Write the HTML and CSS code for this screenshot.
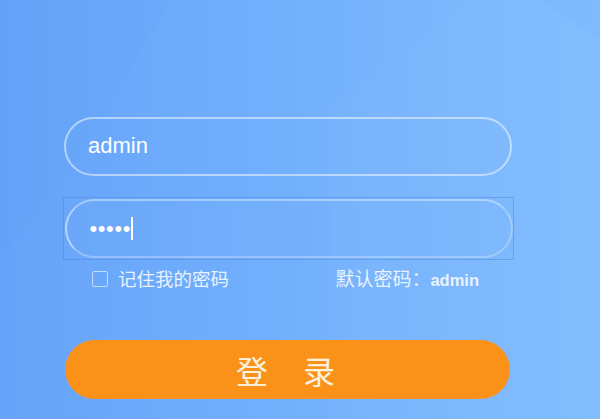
FILE: index.html
```html
<!DOCTYPE html>
<html lang="zh-CN">
<head>
<meta charset="utf-8">
<title>登录</title>
<link rel="stylesheet" href="styles.css">
</head>
<body>
<div class="bg">
  <svg class="shapes" width="600" height="419" viewBox="0 0 600 419" aria-hidden="true">
    <polygon points="330,110 470,0 600,0 600,419 330,419" fill="#ffffff" fill-opacity="0.025"/>
    <polygon points="0,0 170,0 90,140 0,260" fill="#3f7fe6" fill-opacity="0.025"/>
    <polygon points="540,0 600,0 600,40" fill="#4c8ae8" fill-opacity="0.05"/>
  </svg>
  <form class="login">
    <div class="field">
      <span class="value">admin</span>
    </div>
    <div class="focus-ring">
      <div class="field focused">
        <span class="dots">•••••</span><span class="caret"></span>
      </div>
    </div>
    <div class="options">
      <label class="remember"><span class="check"></span><span>记住我的密码</span></label>
      <span class="hint">默认密码：<b>admin</b></span>
    </div>
    <div class="submit">登 录</div>
  </form>
</div>
</body>
</html>
```
FILE: styles.css
```css
html, body {
  margin: 0;
  padding: 0;
}
body {
  width: 600px;
  height: 419px;
  overflow: hidden;
  font-family: "Liberation Sans", "Noto Sans CJK SC", sans-serif;
}
.bg {
  position: relative;
  width: 600px;
  height: 419px;
  background: linear-gradient(90deg, #66a3f9 0%, #70aefc 40%, #7ab7fd 75%, #7fbcfe 100%);
}
.shapes {
  position: absolute;
  left: 0;
  top: 0;
}
.login {
  position: relative;
  margin: 0;
  padding: 117px 0 0 64px;
  width: 448px;
  display: flex;
  flex-direction: column;
}
.field {
  box-sizing: border-box;
  height: 59px;
  border: 2px solid rgba(255, 255, 255, 0.5);
  border-radius: 30px;
  display: flex;
  align-items: center;
  padding-left: 22px;
  color: #ffffff;
}
.value {
  font-size: 22px;
  line-height: 1;
  padding-bottom: 2px;
}
.focus-ring {
  margin: 21px 0 0 -1px;
  border: 1.5px solid rgba(75, 135, 225, 0.5);
  padding: 1px 0.5px;
  width: 448px;
  background: rgba(120, 175, 250, 0.15);
}
.focused {
  border-color: rgba(255, 255, 255, 0.28);
  border-left-color: rgba(255, 255, 255, 0.5);
  border-top-color: rgba(255, 255, 255, 0.38);
  padding-left: 23px;
}
.dots {
  font-size: 22px;
  letter-spacing: 0.6px;
  line-height: 1;
}
.caret {
  display: inline-block;
  width: 1.5px;
  height: 23px;
  background: #ffffff;
}
.options {
  margin-top: 8px;
  height: 21px;
  display: flex;
  align-items: center;
  justify-content: space-between;
  padding: 0 33px 0 28px;
  color: #e9f2ff;
  font-size: 18px;
}
.remember {
  display: flex;
  align-items: center;
  gap: 10px;
  font-family: "Noto Sans CJK SC", sans-serif;
  font-size: 18.5px;
  line-height: 21px;
}
.check {
  box-sizing: border-box;
  width: 16px;
  height: 16px;
  border: 1.5px solid rgba(255, 255, 255, 0.6);
  border-radius: 2px;
}
.hint {
  font-family: "Noto Sans CJK SC", sans-serif;
  font-size: 19px;
  line-height: 21px;
}
.hint b {
  font-family: "Liberation Sans", sans-serif;
  font-size: 16.5px;
}
.submit {
  margin: 51px 2px 0 1px;
  height: 59px;
  border-radius: 30px;
  background: #fa921a;
  color: #fdf1dc;
  display: flex;
  align-items: center;
  justify-content: center;
  font-family: "Noto Sans CJK SC", sans-serif;
  font-size: 32px;
  letter-spacing: 14px;
  padding-left: 10px;
  line-height: 1;
}
```
